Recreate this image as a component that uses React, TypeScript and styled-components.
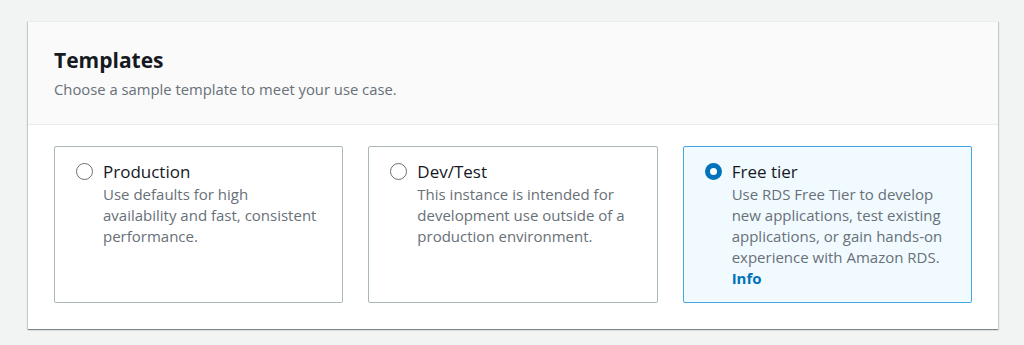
import React from 'react';
import styled, { createGlobalStyle } from 'styled-components';

const GlobalStyle = createGlobalStyle`
  html, body {
    margin: 0;
    padding: 0;
    background: #f2f3f3;
    font-family: "Open Sans", "Liberation Sans", sans-serif;
  }
`;

const Page = styled.div`
  padding: 21px 26px 16px 28px;
`;

const Container = styled.div`
  background: #ffffff;
  box-shadow: 0 1px 1px 0 rgba(0, 28, 36, 0.3), 1px 1px 1px 0 rgba(0, 28, 36, 0.15), -1px 1px 1px 0 rgba(0, 28, 36, 0.15);
  border-top: 1px solid #eaeded;
`;

const Header = styled.div`
  background: #fafafa;
  border-bottom: 1px solid #eaeded;
  padding: 24px 26px 25px;
`;

const Title = styled.h2`
  margin: 0;
  font-size: 21px;
  line-height: 29px;
  font-weight: 700;
  color: #16191f;
`;

const Subtitle = styled.p`
  margin: 4px 0 0;
  font-size: 14.8px;
  line-height: 20px;
  color: #687078;
`;

const Body = styled.div`
  display: grid;
  grid-template-columns: repeat(3, 1fr);
  gap: 25px;
  padding: 21px 26px 26px;
`;

const Tile = styled.label<{ $selected: boolean }>`
  display: flex;
  gap: 10px;
  align-items: flex-start;
  min-height: 156px;
  box-sizing: border-box;
  padding: 12px 18px 13px 21px;
  border: 1px solid ${(p) => (p.$selected ? '#44a6e0' : '#aab7b8')};
  border-radius: 2px;
  background: ${(p) => (p.$selected ? '#f1faff' : '#ffffff')};
  cursor: pointer;
`;

const Radio = styled.span<{ $checked: boolean }>`
  flex: none;
  width: 17px;
  height: 17px;
  margin-top: 4px;
  border-radius: 50%;
  box-sizing: border-box;
  border: ${(p) => (p.$checked ? '5px solid #0073bb' : '1.5px solid #687078')};
  background: #ffffff;
`;

const TileText = styled.div`
  display: flex;
  flex-direction: column;
`;

const TileTitle = styled.span`
  font-size: 17px;
  line-height: 25px;
  color: #16191f;
`;

const TileDesc = styled.span`
  font-size: 15px;
  line-height: 21px;
  color: #687078;
`;

const InfoLink = styled.a`
  font-size: 15px;
  line-height: 21px;
  font-weight: 700;
  color: #0073bb;
  text-decoration: none;
`;

const templates = [
    {
        id: 'production',
        name: 'Production',
        description: 'Use defaults for high availability and fast, consistent performance.',
    },
    {
        id: 'devtest',
        name: 'Dev/Test',
        description: 'This instance is intended for development use outside of a production environment.',
    },
    {
        id: 'free',
        name: 'Free tier',
        description: 'Use RDS Free Tier to develop new applications, test existing applications, or gain hands-on experience with Amazon RDS.',
        info: true,
    },
];

const App = () => {
    const [selected, setSelected] = React.useState('free');

    return (
        <>
            <GlobalStyle />
            <Page>
                <Container>
                    <Header>
                        <Title>Templates</Title>
                        <Subtitle>Choose a sample template to meet your use case.</Subtitle>
                    </Header>
                    <Body>
                        {templates.map((t) => (
                            <Tile key={t.id} $selected={selected === t.id} onClick={() => setSelected(t.id)}>
                                <Radio $checked={selected === t.id} />
                                <TileText>
                                    <TileTitle>{t.name}</TileTitle>
                                    <TileDesc>{t.description}</TileDesc>
                                    {t.info && <InfoLink href="#">Info</InfoLink>}
                                </TileText>
                            </Tile>
                        ))}
                    </Body>
                </Container>
            </Page>
        </>
    );
};

export default App;
